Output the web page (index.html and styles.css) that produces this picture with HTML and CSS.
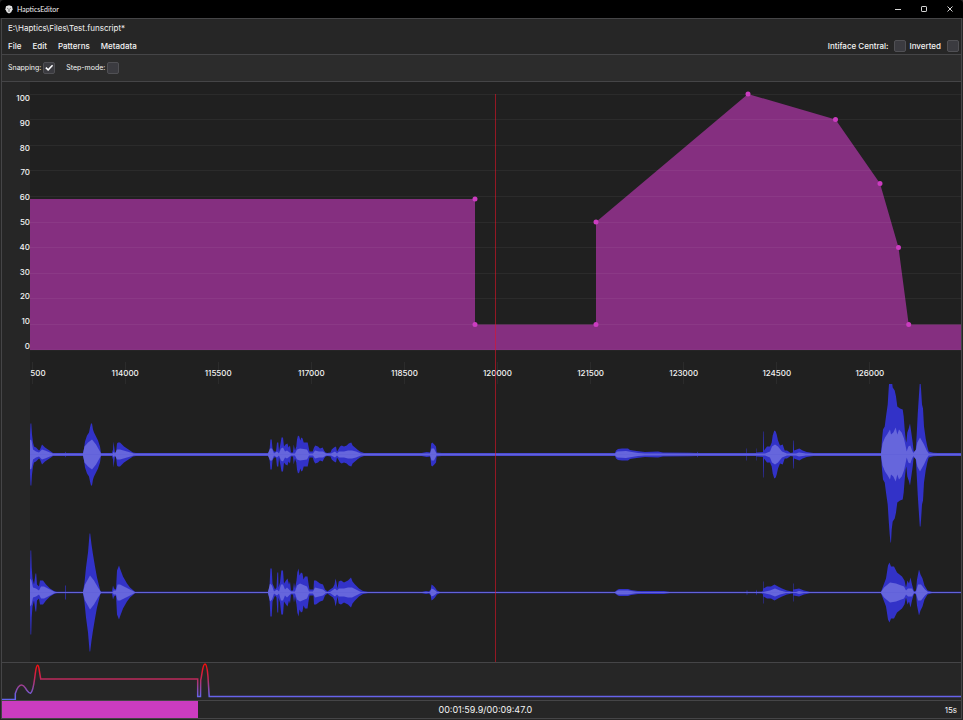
FILE: index.html
```html
<!DOCTYPE html>
<html lang="en">
<head>
<meta charset="utf-8">
<title>HapticsEditor</title>
<link rel="stylesheet" href="styles.css">
</head>
<body>
<div class="window">
  <header class="titlebar">
    <svg class="logo" viewBox="0 0 8 9" aria-hidden="true">
      <path d="M1 1.200 4 .3 7 1.200 7.600 4.200 6.200 7.200 4 8.600 1.800 7.200.4 4.200Z" fill="#e4e4e4"/>
      <path d="M2.200 3.200 3.400 3.900M5.800 3.200 4.600 3.900M3 6H5M4 4.300V5.200" stroke="#333" stroke-width=".7" fill="none"/>
    </svg>
    <h1 class="title">HapticsEditor</h1>
    <div class="controls">
      <button type="button" aria-label="Minimize"><svg viewBox="0 0 8 8"><path d="M1 4.500H7"/></svg></button>
      <button type="button" aria-label="Maximize"><svg viewBox="0 0 8 8"><rect x="1.500" y="1.500" width="5" height="5" rx=".6"/></svg></button>
      <button type="button" aria-label="Close"><svg viewBox="0 0 8 8"><path d="M1.500 1.500 6.500 6.500M6.500 1.500 1.500 6.500"/></svg></button>
    </div>
  </header>

  <main class="frame">
    <section class="head">
      <div class="path">E:\Haptics\Files\Test.funscript*</div>
      <div class="menubar">
        <nav class="menu">
          <button type="button">File</button>
          <button type="button">Edit</button>
          <button type="button">Patterns</button>
          <button type="button">Metadata</button>
        </nav>
        <div class="toggles">
          <label for="intiface">Intiface Central:</label><input type="checkbox" id="intiface">
          <label for="inverted">Inverted</label><input type="checkbox" id="inverted">
        </div>
      </div>
    </section>

    <section class="toolbar">
      <div class="option"><label for="snapping">Snapping:</label><input type="checkbox" id="snapping" checked></div>
      <div class="option"><label for="step">Step-mode:</label><input type="checkbox" id="step"></div>
    </section>

    <section class="editor">
      <div class="gutter">
        <ol class="scale">
          <li>100</li><li>90</li><li>80</li><li>70</li><li>60</li><li>50</li><li>40</li><li>30</li><li>20</li><li>10</li><li>0</li>
        </ol>
      </div>
      <div class="plot">
        <svg class="graph" viewBox="0 0 931 256" preserveAspectRatio="none" role="img" aria-label="Haptic intensity">
          <path class="area" d="M0 105H445V230.400H566V128L718 0 805.500 25.600 850 89.600 868.500 153.600 878.700 230.400H931V256H0Z"/>
          <path class="grid" d="M0 .5H931M0 25.500H931M0 51.500H931M0 76.500H931M0 102.500H931M0 128.500H931M0 153.500H931M0 179.500H931M0 204.500H931M0 230.500H931M0 256H931"/>
          <path class="points" d="M445 105h0M445 230.400h0M566 230.400h0M566 128h0M718 0h0M805.500 25.600h0M850 89.600h0M868.500 153.600h0M878.700 230.400h0"/>
        </svg>
        <div class="times">
          <ol>
            <li>500</li><li>114000</li><li>115500</li><li>117000</li><li>118500</li><li>120000</li><li>121500</li><li>123000</li><li>124500</li><li>126000</li>
          </ol>
        </div>
        <svg class="waves" viewBox="0 0 931 278" preserveAspectRatio="none" role="img" aria-label="Audio waveform, two channels">
          <defs>
            <path id="peak-left" d="M0 0V20L.5 31H1.300L2 20 3 12 4 8 6 7 7 6 9 4 10 5 12 10 13 9 15 7 18 5 21 3 23 1.500H35L35.500 3 36 1.500H53L54 6 55 13 57 19 59 22 60 27 61 31H62L63 25 64 22 66 18 68 14 70 8 71 1.500H82L83 5 83.500 13 84 9 85 2H86L87 11 88 12H90L92 10 94 8 97 6 100 4 103 2 106 1.500H238L239.500 4 240.400 15H241.700L242.500 6 244 3H246L247 12H248.300L249 3 250.500 11 251.500 17H253L254 8 255.500 10 257.500 11 258.500 7 260 9 261 2H263L263.700 10 265 4 266.300 8 267 15 268 19 269.300 18 270.300 14 271.300 17 272.600 16 273.700 12H277.700L278.700 7 279.500 3H282.700L284 7 285.300 9 288 8 290 6 292.700 7 294 4 295.500 2 297.300 1.500 300.500 2 301.700 5 304 7 306 8 307 3 308.300 5 310 8 311.700 9 314 8 316.700 9 318.700 11 321.300 12 322.600 9 325 7 327.300 5 330 3 334 1.500H391.700L396.700 2.500 400.300 2 401.200 11 402.300 12 404.300 10 406 8 406.700 2 411.700 1.500H585L586 4 588 5.500 592 6H598L600 4.500 606.700 3.500 615 2.500 628 3 633 2 660 1.700 667 1.500 667.500 3 668 1.500H716.500V6H717V1.500H726V6H726.400V2L733 2.500V23H733.500L734 4 737 8H740L741.700 12 742.700 19 744.300 24 745.700 23 746.700 20 748 14 750 9 752.700 10 754.700 4H757L760.700 1.500 763 2V14H763.500L764 4 766.700 5 769.300 6 772.700 4 776.700 2.500 783.300 1.500H851L852 15 853 25 854.700 28 856 38 857.700 50 858.700 66 859.700 80 860.500 88H861L861.700 75 862.700 67 864.700 64 866 58 867.300 48 870 46 872.700 45 873.700 38 874.700 25 875.700 15 876.300 12 877.300 22 878.700 26 880 31 881.300 22 882.700 12 883.700 3H885.700L886.700 20 887.700 40 889 60 889.800 72H890.500L891 66 892 50 893 46 894 28 895.700 16 897.300 8 898.700 3 903.300 1.800 908 1.500H931V0Z"/>
            <path id="body-left" d="M0 0V15L1.500 14 3 5 6 3 9 2 12 5 15 4 20 2 23 1H53L54.500 8 58 12 62 15 66 10 70 3 71 1H83L83.500 3 85 1 87 5 90 5 97 3 104 1H238L240 6 242 6 244 1 247 3 249 1 251 6 253 7 255 3 257 4 261 1 265 1 267 5 270 6 277 5 279 1 283 1 285 4 289 3 293 3 296 1H301L305 3 307 1 309 3 314 3 318 4 322 4 326 3 331 1H400L401.500 6 404 6 406.500 1H585L587 3 596 3.500 602 2.500 608 1.500 615 1H735L740 3 742 8 745 10 748 8 752 3 757 1 766 1 769 2 776 1H851L852.500 11 855 17 857.700 21 860 25 861 20 863.300 22 865.700 27 867.300 20 869 25 871.700 22 874 16 875.700 8 876.700 3 878.300 8 880.300 9 881.700 5 883.300 1.500 886 5 887.300 12 890 17 891.700 14 894 10 896.700 4 898.700 1H931V0Z"/>
            <path id="peak-right" d="M0 0V20L.5 42H1.200L1.700 25 2.500 14 4 8 5.500 19H6.200L7 8 9 6 10 12H13L16 8 20 4 24 1.500 27 .8H35V7H35.700V.8H53L54.500 10 56 25 58 40 59 52 59.600 59H60.200L61.500 48 63 38 65 26 67 15 69 7 70.500 1H82L83 7 84 4 86 3 87 22 89 27 90 24 93 16 97 9 100 5 105 .8H238L239.500 6 240.400 24H241.700L242.500 9 245 3 246.500 5 247.300 20H248.200L248.500 5 250 10 251.300 22H253L254 9 256 12 257.500 14 259 8 260 11 261 2H263L264 10 265 4 266.500 12 267.300 20 268.500 24 269.500 17 271 20 272.500 19 273.500 13 275 16H277.500L278.500 9 279.500 3H283.500L284 12H286L290 9 293 8 295 3 297.500 1 300 3 303 5 304.500 8 305.500 14 306.500 10 307.500 4 308.700 11 311 12 314 10 318 12 321 15 322.500 11 325 8 329 4 333 1.500 338 .8H392L396 1.500 399 1 400.700 3 401.500 8 403 7 405 5 407 2 410 .8H585L587 2.500 589 3.500H598L601 2.500 608 1.500H634L640 .8H716.500L717 3 717.500 .8H726L726.500 3 727 .8 732 1 733 2V11H733.500V4L737 6 741 6 744.500 8 748 6 752 4 757 2 762 1H763V9H763.500V3L769 4 774 2 780 .8H851L853 6 856 14 858 27 859.500 30 861 26 864 26 867 20 872 16 874.500 12 876 5 877.500 12 879 9 880.500 15 882 8 884 1 886 2 887 13 889 23 890.500 18 892.500 14 894.500 7 897.500 2 902 .8H931V0Z"/>
            <path id="body-right" d="M0 0V14L1.500 12 3 5 6 4 9 2 11 6 14 6 20 3 25 .4H53L55 8 60 17 64 12 68 5 71 .4H83L83.500 2 86 2 87.500 8 90 8 96 5 105 .4H238L240 9 242 7 244 1 247 3 249 1 251 8 253 8 255 3 257 5 261 1 265 1 267 7 270 9 277 6 279 1 283 1 285 5 289 4 293 3 296 .4H300L305 4 307 2 309 4 314 4 318 5 322 5 326 3 331 .4H400L401.500 4 404 3 407 .4H585L588 2 598 2 606 .8 612 .4H733L740 2 745 4 750 2 756 .4H766L769 1.500 774 .4H851L854 5 860 10 866 9 874 6 876 2 878 4 882 4 884 .6 886 1 888 8 891 8 895 3 898 .4H931V0Z"/>
          </defs>
          <g transform="translate(0 70.500)">
            <g class="peak"><use href="#peak-left"/><use href="#peak-left" transform="scale(1 -1)"/></g>
            <g class="body"><use href="#body-left"/><use href="#body-left" transform="scale(1 -1)"/></g>
            <path class="axis" d="M0 0H931"/>
          </g>
          <g transform="translate(0 208.500)">
            <g class="peak"><use href="#peak-right"/><use href="#peak-right" transform="scale(1 -1)"/></g>
            <g class="body"><use href="#body-right"/><use href="#body-right" transform="scale(1 -1)"/></g>
            <path class="axis" d="M0 0H931"/>
          </g>
        </svg>
        <div class="playhead"></div>
      </div>
    </section>

    <section class="overview">
      <svg viewBox="0 0 959 37" preserveAspectRatio="none" role="img" aria-label="Script overview">
        <defs>
          <linearGradient id="heat" gradientUnits="userSpaceOnUse" x1="0" y1="2" x2="0" y2="34">
            <stop offset="0" stop-color="#ff0c0c"/>
            <stop offset=".44" stop-color="#bc2a5c"/>
            <stop offset="1" stop-color="#6464ee"/>
          </linearGradient>
        </defs>
        <path d="M0 36.500H13.300V30.500C15 25 17 22 19.700 22S23 25 25 27.500 27.500 30.500 28.500 30.300C31.500 28.500 32 20 33.300 10.500 34 5 34.800 2.300 35.700 2.300S37 5 37.500 9L38.700 16H195.700V33.500H198.500L198.700 17C200 13 200.500 1 203 1 205 1 205.500 8 206 14L207.200 33.500H959" stroke="url(#heat)"/>
      </svg>
    </section>

    <footer class="status">
      <progress value="119.900" max="586.600" aria-label="Playback position"></progress>
      <span class="clock">00:01:59.9/00:09:47.0</span>
      <span class="span">15s</span>
    </footer>
  </main>
</div>
</body>
</html>
```

FILE: styles.css
```css
* {
  box-sizing: border-box;
}

body {
  margin: 0;
  background: #262626;
  color: #f4f4f4;
  font: 400 8px/10px Inter, "Liberation Sans", sans-serif;
}

button {
  padding: 0;
  border: 0;
  background: none;
  color: inherit;
  font: inherit;
}

ol {
  margin: 0;
  padding: 0;
  list-style: none;
}

svg {
  display: block;
}

.window {
  display: flex;
  flex-direction: column;
  height: 100vh;
}

/* Title bar */

.titlebar {
  display: flex;
  align-items: center;
  height: 18px;
  padding: 0 0 0 5px;
  border-radius: 4px 4px 0 0;
  background: #000;
}

.logo {
  width: 8px;
  height: 9px;
}

.title {
  margin: 0 auto 0 4px;
  font: 400 7px/10px Lato, sans-serif;
}

.controls {
  display: flex;
}

.controls button {
  display: grid;
  place-items: center;
  width: 26px;
  height: 18px;
}

.controls svg {
  width: 8px;
  height: 8px;
  fill: none;
  stroke: #d8d8d8;
  stroke-width: 1;
}

/* Frame and panels */

.frame {
  display: flex;
  flex: 1;
  flex-direction: column;
  min-height: 0;
  margin: 0 1px 1px;
  border: 1px solid #454547;
}

.head,
.toolbar,
.editor,
.overview {
  border-bottom: 1px solid #454547;
}

.path {
  padding: 4px 6px;
}

.menubar {
  display: flex;
  justify-content: space-between;
  align-items: center;
  height: 17px;
  padding: 0 2px 0 6px;
  font-weight: 500;
}

.menu {
  display: flex;
  gap: 11px;
}

.toggles {
  display: flex;
  align-items: center;
}

.toolbar {
  display: flex;
  align-items: center;
  gap: 11px;
  height: 27px;
  padding: 0 6px;
  background: #2c2c2c;
  font-size: 7px;
}

.option {
  display: flex;
  align-items: center;
  gap: 2px;
}

input[type="checkbox"] {
  appearance: none;
  width: 12px;
  height: 12px;
  margin: 0;
  border: 1px solid #505054;
  border-radius: 2px;
  background: #3b3b40;
}

input[type="checkbox"]:checked::after {
  display: block;
  width: 8px;
  height: 8px;
  margin: 1px;
  background: #fff;
  clip-path: polygon(0 52%, 14% 38%, 36% 60%, 84% 8%, 98% 22%, 36% 88%);
  content: "";
}

.toggles label {
  margin-right: 6px;
}

.toggles input + label {
  margin-left: 3px;
}

/* Editor */

.editor {
  display: flex;
  flex: 1;
  min-height: 0;
  font-weight: 500;
}

.gutter,
.plot {
  display: flex;
  flex-direction: column;
  padding-top: 12px;
}

.gutter {
  width: 28px;
}

/* The scale and the gutter below it share the plot's 256 : 278 split. */
.gutter::after {
  flex: 278;
  margin-top: 34px;
  content: "";
}

.scale {
  display: flex;
  flex: 256;
  flex-direction: column;
  justify-content: space-between;
  line-height: 8px;
  text-align: right;
}

.plot {
  position: relative;
  flex: 1;
  min-width: 0;
  background: #202020;
}

.graph,
.waves {
  width: 100%;
  min-height: 0;
}

.graph {
  flex: 256 1 0;
  overflow: visible;
}

.area {
  fill: #852f80;
}

.grid {
  stroke: rgba(255, 255, 255, 0.05);
  vector-effect: non-scaling-stroke;
}

.points {
  fill: none;
  stroke: #cb3cc0;
  stroke-width: 5px;
  stroke-linecap: round;
  vector-effect: non-scaling-stroke;
}

.times {
  height: 34px;
  padding-top: 12px;
  overflow: hidden;
}

.times ol {
  display: grid;
  grid-template-columns: repeat(10, 1fr);
  margin: 0 calc(5% - 2px) 0 calc(2px - 5%);
}

.times li {
  height: 22px;
  background: linear-gradient(#2b2b2b, #2b2b2b) center / 1px 100% no-repeat;
  line-height: 22px;
  text-align: center;
}

/* The leftmost time starts at the plot's edge instead of straddling it. */
.times li:first-child {
  padding-left: 12px;
}

.waves {
  flex: 278 1 0;
  overflow: hidden;
}

.peak {
  fill: #3232c8;
}

.body {
  fill: #6666dc;
}

.axis {
  stroke: #6262da;
  vector-effect: non-scaling-stroke;
}

.playhead {
  position: absolute;
  top: 12px;
  bottom: 0;
  left: calc(50% - 1px);
  width: 1px;
  background: rgba(225, 20, 40, 0.6);
}

/* Overview and status */

.overview {
  height: 38px;
}

.overview svg {
  width: 100%;
  height: 37px;
}

.overview path {
  fill: none;
  stroke-width: 1.5px;
  vector-effect: non-scaling-stroke;
}

.status {
  position: relative;
  display: flex;
  align-items: center;
  height: 17px;
  padding: 0 4px 0 24px;
}

.status progress {
  position: absolute;
  inset: 0;
  width: 100%;
  height: 100%;
  appearance: none;
  border: 0;
}

.status progress::-webkit-progress-bar {
  background: transparent;
}

.status progress::-webkit-progress-value {
  background: #cb3cc0;
}

.clock,
.span {
  position: relative;
}

.clock {
  flex: 1;
  font-size: 9px;
  text-align: center;
}
```
